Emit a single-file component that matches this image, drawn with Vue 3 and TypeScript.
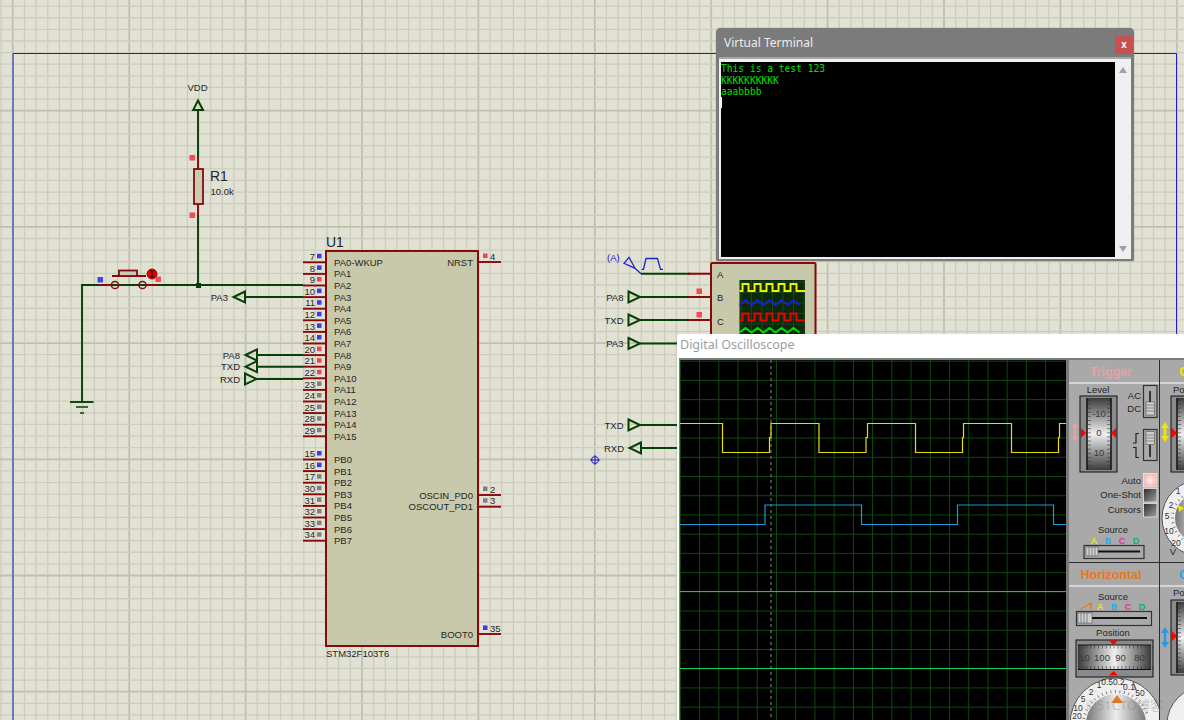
<script setup lang="ts">
interface Pin { num: string; name: string; y: number; mark: string }

const PIN_BLUE = '#3a3af0'
const PIN_RED = '#f84050'
const PIN_GREY = '#808080'

const gridV = Array.from({ length: 103 }, (_, k) => ({ x: 12.8 + 11.64 * (k - 1), major: (k - 1) % 10 === 0 }))
const gridH = Array.from({ length: 64 }, (_, k) => ({ y: 110.7 + 11.62 * (k - 10), major: (k - 10) % 10 === 0 }))

const portA: [string, string, string][] = [
  ['7', 'PA0-WKUP', PIN_BLUE], ['8', 'PA1', PIN_BLUE], ['9', 'PA2', PIN_RED], ['10', 'PA3', PIN_BLUE],
  ['11', 'PA4', PIN_BLUE], ['12', 'PA5', PIN_BLUE], ['13', 'PA6', PIN_BLUE], ['14', 'PA7', PIN_BLUE],
  ['20', 'PA8', PIN_RED], ['21', 'PA9', PIN_RED], ['22', 'PA10', PIN_RED], ['23', 'PA11', PIN_GREY],
  ['24', 'PA12', PIN_GREY], ['25', 'PA13', PIN_GREY], ['28', 'PA14', PIN_GREY], ['29', 'PA15', PIN_GREY],
]
const portB: [string, string, string][] = [
  ['15', 'PB0', PIN_BLUE], ['16', 'PB1', PIN_BLUE], ['17', 'PB2', PIN_GREY], ['30', 'PB3', PIN_GREY],
  ['31', 'PB4', PIN_GREY], ['32', 'PB5', PIN_GREY], ['33', 'PB6', PIN_GREY], ['34', 'PB7', PIN_GREY],
]
const leftPins: Pin[] = [
  ...portA.map(([num, name, mark], i) => ({ num, name, mark, y: 262.3 + 11.6 * i })),
  ...portB.map(([num, name, mark], i) => ({ num, name, mark, y: 459.5 + 11.6 * i })),
]
const rightPins: Pin[] = [
  { num: '4', name: 'NRST', y: 262, mark: PIN_RED },
  { num: '2', name: 'OSCIN_PD0', y: 495, mark: PIN_GREY },
  { num: '3', name: 'OSCOUT_PD1', y: 506.7, mark: PIN_GREY },
  { num: '35', name: 'BOOT0', y: 634, mark: PIN_BLUE },
]

// terminals on the schematic: dir 1 points right (input), -1 points left
const terminals = [
  { label: 'PA3', y: 297, base: 245, dir: -1, end: 303 },
  { label: 'PA8', y: 355, base: 257, dir: -1, end: 303 },
  { label: 'TXD', y: 366.7, base: 257, dir: -1, end: 303 },
  { label: 'RXD', y: 379, base: 245, dir: 1, end: 303 },
  { label: 'PA8', y: 297, base: 628.5, dir: 1, end: 690 },
  { label: 'TXD', y: 320, base: 628.5, dir: 1, end: 690 },
  { label: 'PA3', y: 343.5, base: 628.5, dir: 1, end: 680 },
  { label: 'TXD', y: 425, base: 628.5, dir: 1, end: 680 },
  { label: 'RXD', y: 448, base: 641, dir: -1, end: 680 },
]
function termPoints(t: { y: number; base: number; dir: number }) {
  return `${t.base},${t.y - 5.5} ${t.base + 11.5 * t.dir},${t.y} ${t.base},${t.y + 5.5}`
}
function termWireStart(t: { base: number; dir: number }) {
  return t.dir === 1 ? t.base + 11.5 : t.base
}
function termLabelX(t: { base: number; dir: number }) {
  return t.dir === 1 ? t.base - 5 : t.base - 17
}

// little square wave in the analyser's icon
function square(x0: number, x1: number, hi: number, lo: number, half: number) {
  let d = `M${x0} ${lo}`
  let x = x0 + 3
  d += ` H${x}`
  let up = true
  while (x < x1 - half) {
    d += ` V${up ? hi : lo} H${x + half}`
    x += half
    up = !up
  }
  return d + ` V${lo} H${x1}`
}
function zigzag(x0: number, x1: number, hi: number, lo: number, step: number) {
  const pts: string[] = []
  let up = false
  for (let x = x0; x <= x1; x += step) {
    pts.push(`${x},${up ? hi : lo}`)
    up = !up
  }
  return pts.join(' ')
}

const yellowTrace =
  'M680 423.5H722.5V452.5H769.5V437.5H771V423.5H819V452.5H866V437.5H867.5V423.5H915.5V452.5H962.5V437.5H963.5V423.5H1011.5V452.5H1058.5V437.5H1059.5V423.5H1066'
const blueTrace = 'M680 524.5H765V505H861.5V524.5H957.5V505H1053.5V524.5H1066'
const scopeV = Array.from({ length: 20 }, (_, i) => 680.4 + 19.22 * i)
const scopeH = Array.from({ length: 19 }, (_, i) => 361.2 + 19.22 * i)
const iconV = Array.from({ length: 7 }, (_, i) => 741 + 10.5 * i)
const iconH = Array.from({ length: 6 }, (_, i) => 282 + 10.5 * i)

const rollTicks = Array.from({ length: 17 }, (_, i) => 400 + i * 4.1)
const rollBTicks = Array.from({ length: 17 }, (_, i) => 604 + i * 4.1)
const rulerTicks = Array.from({ length: 20 }, (_, i) => 1079 + i * 3.9)

function dialTicks(cx: number, cy: number, r: number, from: number, to: number, n: number) {
  return Array.from({ length: n }, (_, i) => {
    const a = ((from + ((to - from) * i) / (n - 1)) * Math.PI) / 180
    return {
      x1: cx + r * Math.cos(a),
      y1: cy - r * Math.sin(a),
      x2: cx + (r + 3) * Math.cos(a),
      y2: cy - (r + 3) * Math.sin(a),
    }
  })
}
const voltsTicks = dialTicks(1200, 518, 26, 100, 230, 14)
const timeTicks = dialTicks(1116, 724, 31, 20, 170, 20)
</script>

<template>
  <div class="desk">
    <svg class="sheet" width="1184" height="720" viewBox="0 0 1184 720">
      <g>
        <line v-for="g in gridV" :key="g.x" :x1="g.x" :x2="g.x" y1="0" y2="720" :class="g.major ? 'major' : 'minor'" />
        <line v-for="g in gridH" :key="g.y" :y1="g.y" :y2="g.y" x1="0" x2="1184" :class="g.major ? 'major' : 'minor'" />
      </g>
      <path d="M13 720V53.5H1176.5V720" class="frame" />

      <!-- power rail and pull-up -->
      <polygon points="198,100.5 193.2,110 203,110" class="term" />
      <path d="M198 110V158M198 215V285M82 402V285H303" class="wire" />
      <path d="M198 158V169M198 204V215" class="pin" />
      <rect x="194" y="169" width="9" height="35" class="part" />
      <text x="197.5" y="91" class="lab" text-anchor="middle">VDD</text>
      <text x="210" y="181" class="ref">R1</text>
      <text x="210.5" y="195" class="lab">10.0k</text>
      <rect x="189.5" y="155" width="5.5" height="5.5" class="mark" :fill="PIN_RED" />
      <rect x="189.5" y="212.5" width="5.5" height="5.5" class="mark" :fill="PIN_RED" />
      <rect x="196" y="283" width="5" height="5" fill="#064006" />

      <!-- push button -->
      <path d="M99 285H111.5M146 285H158M112 276H146" class="pin" />
      <circle cx="115" cy="285" r="3.6" class="hollow" />
      <circle cx="142.5" cy="285" r="3.6" class="hollow" />
      <rect x="119" y="270.5" width="18" height="5.5" class="part" />
      <rect x="97.5" y="277" width="5.5" height="5.5" class="mark" :fill="PIN_BLUE" />
      <rect x="155.5" y="276.5" width="5.5" height="5.5" class="mark" :fill="PIN_RED" />
      <circle cx="152" cy="274" r="5" fill="#e00000" stroke="#700" stroke-width="0.8" />
      <path d="M152 270.5V277.5M150.5 272L152 270.5 153.5 272M150.5 276L152 277.5 153.5 276" stroke="#111" fill="none" />

      <!-- ground -->
      <path d="M70 402H93.5" class="wire" />
      <path d="M76 407H88M80 413H84" class="wire thin" />

      <!-- MCU -->
      <rect x="326" y="251" width="152" height="395" class="chip" />
      <text x="326" y="247" class="ref">U1</text>
      <text x="326" y="657" class="lab">STM32F103T6</text>
      <g v-for="p in leftPins" :key="p.num">
        <line x1="303" x2="326" :y1="p.y" :y2="p.y" class="pin" />
        <text x="315" :y="p.y - 2.4" class="lab" text-anchor="end">{{ p.num }}</text>
        <rect x="317" :y="p.y - 8.5" width="4.5" height="4.5" :fill="p.mark" />
        <text x="334" :y="p.y + 3.5" class="lab">{{ p.name }}</text>
      </g>
      <g v-for="p in rightPins" :key="p.num">
        <line x1="478" x2="501" :y1="p.y" :y2="p.y" class="pin" />
        <rect x="483" :y="p.y - 8.5" width="4.5" height="4.5" :fill="p.mark" />
        <text x="490" :y="p.y - 2.4" class="lab">{{ p.num }}</text>
        <text x="473" :y="p.y + 3.5" class="lab" text-anchor="end">{{ p.name }}</text>
      </g>

      <!-- terminals -->
      <g v-for="t in terminals" :key="t.label + t.y">
        <line :x1="termWireStart(t)" :x2="t.end" :y1="t.y" :y2="t.y" class="wire" />
        <polygon :points="termPoints(t)" class="term" />
        <text :x="termLabelX(t)" :y="t.y + 3.5" class="lab" text-anchor="end">{{ t.label }}</text>
      </g>

      <!-- analyser part with its clock generator -->
      <text x="607" y="261" class="lab gen">(A)</text>
      <path d="M624 263.3L629 257.3L635 268.3ZM635 268.3L641 273.7" class="genline" />
      <path d="M641.7 269.3H643.5L646 258.5H657.5L660.5 269.3H663" class="genline" />
      <path d="M641 273.7H690" class="wire" />
      <rect x="711" y="263" width="104.5" height="90" rx="1" class="chip" />
      <path d="M688 273.7H711M688 297H711M688 320H711" class="pin" />
      <rect x="696.5" y="288.5" width="5.5" height="5.5" class="mark" :fill="PIN_RED" />
      <rect x="696.5" y="312" width="5.5" height="5.5" class="mark" :fill="PIN_RED" />
      <text x="717" y="277.5" class="lab">A</text>
      <text x="717" y="301" class="lab">B</text>
      <text x="717" y="324.5" class="lab">C</text>
      <rect x="739.5" y="280" width="65.5" height="60" fill="#0a2a0a" />
      <line v-for="x in iconV" :key="x" :x1="x" :x2="x" y1="280" y2="340" stroke="#1f5a1f" stroke-width="0.6" />
      <line v-for="y in iconH" :key="y" :y1="y" :y2="y" x1="739.5" x2="805" stroke="#1f5a1f" stroke-width="0.6" />
      <path :d="square(739.5, 805, 284, 291, 6)" class="mini" stroke="#f0f000" />
      <polyline :points="zigzag(739.5, 805, 300, 305, 6)" class="mini" stroke="#1a1af0" />
      <path :d="square(739.5, 805, 313.5, 320.5, 6)" class="mini" stroke="#f00000" />
      <polyline :points="zigzag(739.5, 805, 328, 332.5, 6)" class="mini" stroke="#00e000" />

      <!-- origin marker -->
      <circle cx="595" cy="460" r="3.5" class="origin" />
      <path d="M590 460H600M595 455V465" class="origin" />
    </svg>

    <!-- hidden gradient definitions used by the scope panel -->
    <svg class="defs" width="0" height="0">
      <defs>
        <linearGradient id="roll" x1="0" y1="0" x2="0" y2="1">
          <stop offset="0" stop-color="#3c3c3c" />
          <stop offset="0.5" stop-color="#f0f0f0" />
          <stop offset="1" stop-color="#3c3c3c" />
        </linearGradient>
        <linearGradient id="rule" x1="0" y1="0" x2="1" y2="0">
          <stop offset="0" stop-color="#3c3c3c" />
          <stop offset="0.5" stop-color="#f0f0f0" />
          <stop offset="1" stop-color="#3c3c3c" />
        </linearGradient>
        <linearGradient id="btn" x1="0" y1="0" x2="1" y2="1">
          <stop offset="0" stop-color="#2c2c2c" />
          <stop offset="1" stop-color="#a0a0a0" />
        </linearGradient>
        <linearGradient id="knob" x1="0" y1="0" x2="1" y2="0">
          <stop offset="0" stop-color="#777" />
          <stop offset="0.5" stop-color="#eee" />
          <stop offset="1" stop-color="#777" />
        </linearGradient>
        <radialGradient id="lit">
          <stop offset="0" stop-color="#fff0f0" />
          <stop offset="1" stop-color="#f4b8b8" />
        </radialGradient>
      </defs>
    </svg>

    <section class="term-win">
      <header class="term-win__bar">
        <span>Virtual Terminal</span>
        <span class="term-win__close">x</span>
      </header>
      <div class="term-win__body">
        <pre class="term-win__screen">This is a test 123
KKKKKKKKKK
aaabbbb
<i class="caret"></i></pre>
        <div class="term-win__scroll">
          <span class="arrow arrow--up"></span>
          <span class="arrow arrow--down"></span>
        </div>
      </div>
    </section>

    <section class="scope">
      <header class="scope__bar">Digital Oscilloscope</header>
      <div class="scope__body">
        <svg class="scope__screen" width="386" height="361" viewBox="680 360 386 361">
          <rect x="680" y="360" width="386" height="361" fill="#000" />
          <line v-for="x in scopeV" :key="x" :x1="x" :x2="x" y1="360" y2="721" class="scope-grid" />
          <line v-for="y in scopeH" :key="y" :y1="y" :y2="y" x1="680" x2="1066" class="scope-grid" />
          <line x1="771" x2="771" y1="360" y2="721" class="cursor" />
          <path :d="yellowTrace" class="trace" stroke="#e8e000" />
          <path :d="blueTrace" class="trace" stroke="#1a9ad8" />
          <line x1="680" x2="1066" y1="591.5" y2="591.5" class="trace" stroke="#c8607e" />
          <line x1="680" x2="1066" y1="668.5" y2="668.5" class="trace" stroke="#10d050" />
        </svg>

        <div class="panel">
          <div class="sect">
            <div class="sect__head sect__head--trigger">Trigger</div>
            <svg class="sect__face" viewBox="1069 384 90 176" width="90" height="176">
              <text x="1098" y="393" class="pl" text-anchor="middle">Level</text>
              <rect x="1080" y="396" width="37" height="76" class="well" />
              <rect x="1087" y="398" width="24" height="72" fill="url(#roll)" />
              <path d="M1087 398V470M1111 398V470" stroke="#111" stroke-width="1.5" />
              <g v-for="y in rollTicks" :key="y">
                <line x1="1088" x2="1091" :y1="y" :y2="y" stroke="#333" stroke-width="0.6" />
                <line x1="1107" x2="1110" :y1="y" :y2="y" stroke="#333" stroke-width="0.6" />
              </g>
              <text x="1099" y="416.5" class="pl dim" text-anchor="middle">-10</text>
              <text x="1099" y="436" class="pl dim" text-anchor="middle">0</text>
              <text x="1099" y="455.5" class="pl dim" text-anchor="middle">10</text>
              <polygon points="1081,428 1086,433 1081,438" fill="#f00" />
              <polygon points="1116,428 1111,433 1116,438" fill="#f00" />
              <path d="M1075 422L1078 427H1076V437H1078L1075 442L1072 437H1074V427H1072Z" fill="#e8a0a8" />

              <text x="1141" y="399" class="pl" text-anchor="end">AC</text>
              <text x="1141" y="412" class="pl" text-anchor="end">DC</text>
              <rect x="1143.5" y="385.5" width="13.5" height="32" class="sw" />
              <line x1="1150" x2="1150" y1="391" y2="412" stroke="#111" stroke-width="1.5" />
              <rect x="1146" y="402" width="8.5" height="13" class="thumb" />
              <path d="M1146 405H1154M1146 408H1154M1146 411H1154" stroke="#666" stroke-width="0.7" />
              <rect x="1143.5" y="429.5" width="13.5" height="31" class="sw" />
              <line x1="1150" x2="1150" y1="435" y2="457" stroke="#111" stroke-width="1.5" />
              <rect x="1146" y="431.5" width="8.5" height="13" class="thumb" />
              <path d="M1146 435H1154M1146 438H1154M1146 441H1154" stroke="#666" stroke-width="0.7" />
              <path d="M1133 443H1136V433.5H1139M1133 447.5H1136V457.5H1139" fill="none" stroke="#222" stroke-width="1.2" />

              <text x="1141" y="484" class="pl" text-anchor="end">Auto</text>
              <text x="1141" y="498" class="pl" text-anchor="end">One-Shot</text>
              <text x="1141" y="513" class="pl" text-anchor="end">Cursors</text>
              <rect x="1143.5" y="473.5" width="13.5" height="13.5" fill="url(#lit)" class="key" />
              <rect x="1143.5" y="488.5" width="13.5" height="13.5" fill="url(#btn)" class="key" />
              <rect x="1143.5" y="503.5" width="13.5" height="13.5" fill="url(#btn)" class="key" />

              <text x="1113" y="533" class="pl" text-anchor="middle">Source</text>
              <text x="1094" y="544" class="src" fill="#e8e800" text-anchor="middle">A</text>
              <text x="1108" y="544" class="src" fill="#2aa8e8" text-anchor="middle">B</text>
              <text x="1122" y="544" class="src" fill="#e0309a" text-anchor="middle">C</text>
              <text x="1136" y="544" class="src" fill="#10b060" text-anchor="middle">D</text>
              <rect x="1084" y="545.5" width="60" height="13" class="sw" />
              <line x1="1097" x2="1140" y1="551.5" y2="551.5" stroke="#111" stroke-width="2" />
              <rect x="1086" y="547" width="12" height="9" class="thumb" />
              <path d="M1089 547V556M1092 547V556M1095 547V556" stroke="#666" stroke-width="0.7" />
            </svg>
          </div>

          <div class="sect">
            <div class="sect__head sect__head--a">Channel A</div>
            <svg class="sect__face" viewBox="1160 384 100 176" width="100" height="176">
              <text x="1173" y="393" class="pl">Position</text>
              <rect x="1171" y="396" width="37" height="76" class="well" />
              <rect x="1177" y="398" width="24" height="72" fill="url(#roll)" />
              <line x1="1177" x2="1177" y1="398" y2="470" stroke="#111" stroke-width="1.5" />
              <line v-for="y in rollTicks" :key="y" x1="1178" x2="1181" :y1="y" :y2="y" stroke="#333" stroke-width="0.6" />
              <polygon points="1172,428 1177,433 1172,438" fill="#f00" />
              <path d="M1165 422L1169 428H1166.2V436H1169L1165 442L1161 436H1163.8V428H1161Z" fill="#f0e800" />
              <circle cx="1200" cy="518" r="38" fill="#efefef" stroke="#555" />
              <circle cx="1200" cy="518" r="25" fill="url(#knob)" />
              <line v-for="(t, i) in voltsTicks" :key="i" :x1="t.x1" :y1="t.y1" :x2="t.x2" :y2="t.y2" stroke="#333" stroke-width="0.6" />
              <polygon points="1178,505 1184,508 1179,512" fill="#f0e800" />
              <text x="1178" y="494" class="dial" text-anchor="middle">1</text>
              <text x="1171" y="508" class="dial" text-anchor="middle">2</text>
              <text x="1167" y="519" class="dial" text-anchor="middle">5</text>
              <text x="1169" y="534" class="dial" text-anchor="middle">10</text>
              <text x="1176" y="546" class="dial" text-anchor="middle">20</text>
              <text x="1173" y="555" class="pl" text-anchor="middle">V</text>
            </svg>
          </div>

          <div class="sect">
            <div class="sect__head sect__head--h">Horizontal</div>
            <svg class="sect__face" viewBox="1069 587 90 134" width="90" height="134">
              <text x="1113" y="600" class="pl" text-anchor="middle">Source</text>
              <path d="M1081 609L1091 603V609" fill="none" stroke="#e87820" stroke-width="1.3" />
              <text x="1100" y="609.5" class="src" fill="#e8e800" text-anchor="middle">A</text>
              <text x="1114" y="609.5" class="src" fill="#2aa8e8" text-anchor="middle">B</text>
              <text x="1128" y="609.5" class="src" fill="#e0309a" text-anchor="middle">C</text>
              <text x="1142" y="609.5" class="src" fill="#10b060" text-anchor="middle">D</text>
              <rect x="1076.5" y="611.5" width="75" height="14" class="sw" />
              <line x1="1090" x2="1147" y1="618" y2="618" stroke="#111" stroke-width="2" />
              <rect x="1078" y="613" width="14" height="10" class="thumb" />
              <path d="M1081 613V623M1084 613V623M1087 613V623" stroke="#666" stroke-width="0.7" />
              <text x="1113" y="636" class="pl" text-anchor="middle">Position</text>
              <rect x="1076" y="640" width="77" height="37" class="well" />
              <rect x="1078" y="645" width="73" height="24" fill="url(#rule)" />
              <path d="M1078 645H1151M1078 669.5H1151" stroke="#111" stroke-width="1.2" />
              <g v-for="x in rulerTicks" :key="x">
                <line :x1="x" :x2="x" y1="646" y2="648.5" stroke="#333" stroke-width="0.6" />
                <line :x1="x" :x2="x" y1="666" y2="669" stroke="#333" stroke-width="0.6" />
              </g>
              <text x="1084.5" y="660.5" class="pl dim" text-anchor="middle">10</text>
              <text x="1102" y="660.5" class="pl dim" text-anchor="middle">100</text>
              <text x="1120.5" y="660.5" class="pl dim" text-anchor="middle">90</text>
              <text x="1139.5" y="660.5" class="pl dim" text-anchor="middle">80</text>
              <polygon points="1109,640.5 1118,640.5 1113.5,645" fill="#f00" />
              <polygon points="1109,675.5 1118,675.5 1113.5,671" fill="#f00" />

              <circle cx="1116" cy="724" r="46" fill="#efefef" stroke="#555" />
              <line x1="1133" y1="682" x2="1136" y2="690" stroke="#666" stroke-width="1.5" />
              <line v-for="(t, i) in timeTicks" :key="i" :x1="t.x1" :y1="t.y1" :x2="t.x2" :y2="t.y2" stroke="#333" stroke-width="0.6" />
              <circle cx="1116" cy="724" r="30" fill="url(#knob)" />
              <polygon points="1117,695 1123,703 1111,703" fill="#e87820" />
              <text x="1113" y="685" class="dial" text-anchor="middle">0.50.2</text>
              <text x="1099" y="688" class="dial" text-anchor="middle">1</text>
              <text x="1091" y="695" class="dial" text-anchor="middle">2</text>
              <text x="1083" y="702" class="dial" text-anchor="middle">5</text>
              <text x="1078" y="711" class="dial" text-anchor="middle">10</text>
              <text x="1077" y="719" class="dial" text-anchor="middle">20</text>
              <text x="1129" y="690" class="dial" text-anchor="middle">0.1</text>
              <text x="1140" y="696" class="dial" text-anchor="middle">50</text>
            </svg>
          </div>

          <div class="sect">
            <div class="sect__head sect__head--b">Channel B</div>
            <svg class="sect__face" viewBox="1160 587 100 134" width="100" height="134">
              <text x="1173" y="596" class="pl">Position</text>
              <rect x="1171" y="600" width="37" height="75" class="well" />
              <rect x="1177" y="602" width="24" height="71" fill="url(#roll)" />
              <line x1="1177" x2="1177" y1="602" y2="673" stroke="#111" stroke-width="1.5" />
              <line v-for="y in rollBTicks" :key="y" x1="1178" x2="1181" :y1="y" :y2="y" stroke="#333" stroke-width="0.6" />
              <polygon points="1172,631 1177,636 1172,641" fill="#f00" />
              <path d="M1165 627L1169 633H1166.2V642H1169L1165 648L1161 642H1163.8V633H1161Z" fill="#2a9ae8" />
              <circle cx="1204" cy="724" r="37" fill="#efefef" stroke="#555" />
            </svg>
          </div>
        </div>
      </div>
    </section>

    <span class="mark-text">©51CTO博客</span>
  </div>
</template>

<style>
html,
body {
  margin: 0;
  overflow: hidden;
}
</style>

<style scoped>
.desk {
  position: relative;
  width: 1184px;
  height: 720px;
  overflow: hidden;
  background: #e2e2d4;
  font-family: 'Liberation Sans', Arial, sans-serif;
}
.sheet {
  position: absolute;
  left: 0;
  top: 0;
}
.defs {
  position: absolute;
}
.minor {
  stroke: #cdcdbe;
  stroke-width: 1.3;
}
.major {
  stroke: #c0c0b1;
  stroke-width: 1.8;
}
.frame {
  fill: none;
  stroke: #2020c8;
  stroke-width: 1;
}
.wire {
  fill: none;
  stroke: #064006;
  stroke-width: 1.9;
}
.wire.thin {
  stroke-width: 1.4;
}
.pin {
  fill: none;
  stroke: #860a0a;
  stroke-width: 1.9;
}
.part {
  fill: #cbcbb3;
  stroke: #860a0a;
  stroke-width: 1.8;
}
.hollow {
  fill: none;
  stroke: #860a0a;
  stroke-width: 1.5;
}
.chip {
  fill: #c8c8aa;
  stroke: #860a0a;
  stroke-width: 2;
}
.term {
  fill: none;
  stroke: #064006;
  stroke-width: 2;
}
.mark {
  opacity: 0.95;
}
.lab {
  font-size: 9.5px;
  fill: #262626;
}
.ref {
  font-size: 14px;
  fill: #262626;
}
.gen {
  fill: #2020c8;
}
.genline {
  fill: none;
  stroke: #2020c8;
  stroke-width: 1.3;
}
.mini {
  fill: none;
  stroke-width: 2;
}
.origin {
  fill: none;
  stroke: #2020c8;
  stroke-width: 1;
}

/* terminal window */
.term-win {
  position: absolute;
  left: 716px;
  top: 28px;
  width: 418px;
  height: 233px;
  display: flex;
  flex-direction: column;
  border-radius: 5px 5px 2px 2px;
  background: #7b7b7b;
  box-shadow: 0 0 1px #555;
}
.term-win__bar {
  height: 29px;
  flex: none;
  display: flex;
  align-items: flex-start;
  justify-content: space-between;
  padding: 7px 1px 0 8px;
  box-sizing: border-box;
  color: #ececec;
  font-family: 'Noto Sans', sans-serif;
  font-size: 12px;
  line-height: 16px;
}
.term-win__close {
  width: 18px;
  height: 18px;
  margin-top: 1px;
  background: #c75050;
  color: #fff;
  font: bold 10px/17px 'Liberation Sans', sans-serif;
  text-align: center;
}
.term-win__body {
  flex: 1;
  display: flex;
  margin: 0 3px 2px;
  padding: 3px 0 2px 2px;
  background: #f0f0f0;
  border-top: 2px solid #a8a8a8;
}
.term-win__screen {
  flex: 1;
  margin: 0;
  padding: 1px 0 0 0;
  background: #000;
  color: #00e000;
  font-family: 'DejaVu Sans Mono', monospace;
  font-size: 9.6px;
  line-height: 11.6px;
  position: relative;
}
.caret {
  position: absolute;
  left: 0;
  top: 35px;
  width: 1px;
  height: 11px;
  background: #fff;
}
.term-win__scroll {
  width: 16px;
  flex: none;
  display: flex;
  flex-direction: column;
  justify-content: space-between;
  align-items: center;
  padding: 5px 0 5px;
  background: #f0f0f0;
}
.arrow {
  width: 0;
  height: 0;
  border-left: 4px solid transparent;
  border-right: 4px solid transparent;
}
.arrow--up {
  border-bottom: 6px solid #a0a0a0;
}
.arrow--down {
  border-top: 6px solid #a0a0a0;
}

/* oscilloscope window */
.scope {
  position: absolute;
  left: 677px;
  top: 334px;
  width: 620px;
  height: 400px;
  display: flex;
  flex-direction: column;
  background: #fff;
  border-radius: 3px 0 0 0;
}
.scope__bar {
  height: 24px;
  flex: none;
  padding-left: 3px;
  color: #9c9ca4;
  font-family: 'Noto Sans', sans-serif;
  font-size: 12.5px;
  line-height: 22px;
}
.scope__body {
  flex: 1;
  display: flex;
  margin-left: 2px;
  padding-left: 1px;
  padding-top: 2px;
  background: #7a7a7a;
  gap: 2px;
  align-items: flex-start;
}
.scope__screen {
  flex: none;
  display: block;
}
.panel {
  flex: none;
  display: grid;
  grid-template-columns: 90px 100px;
  grid-template-rows: 202px 1fr;
  column-gap: 1px;
  row-gap: 1px;
  background: #2c2c2c;
  margin-left: 1px;
  padding-top: 0;
  height: 362px;
}
.sect {
  display: flex;
  flex-direction: column;
  background: #a9a9a9;
  overflow: hidden;
}
.sect__head {
  height: 24px;
  flex: none;
  box-sizing: border-box;
  border-bottom: 2px solid #d4d4d4;
  text-align: center;
  font-weight: bold;
  font-size: 12.5px;
  line-height: 24px;
}
.sect__head--trigger {
  color: #e6a0a8;
  padding-right: 6px;
}
.sect__head--a {
  color: #f0e800;
}
.sect__head--b {
  color: #2aa0e8;
}
.sect__head--h {
  color: #e87820;
  padding-right: 6px;
}
.sect__face {
  display: block;
  flex: none;
}
.scope-grid {
  stroke: #0d4a0d;
  stroke-width: 1;
}
.cursor {
  stroke: #8c8c8c;
  stroke-width: 1;
  stroke-dasharray: 3 3;
}
.trace {
  fill: none;
  stroke-width: 1.2;
}
.pl {
  font-size: 9.5px;
  fill: #262626;
}
.pl.dim {
  fill: #3a3a3a;
}
.src {
  font-size: 9px;
  font-weight: bold;
}
.dial {
  font-size: 8.5px;
  fill: #333;
}
.well {
  fill: #8a8a8a;
  stroke: #111;
  stroke-width: 1;
}
.sw {
  fill: #a9a9a9;
  stroke: #333;
  stroke-width: 1.2;
}
.thumb {
  fill: #d0d0d0;
  stroke: #555;
  stroke-width: 0.6;
}
.key {
  stroke: #e8e8e8;
  stroke-width: 0.8;
}
.mark-text {
  position: absolute;
  left: 1086px;
  top: 695px;
  font-family: 'Noto Sans', 'Noto Sans CJK SC', sans-serif;
  font-size: 13px;
  color: rgba(120, 120, 120, 0.35);
}
</style>
